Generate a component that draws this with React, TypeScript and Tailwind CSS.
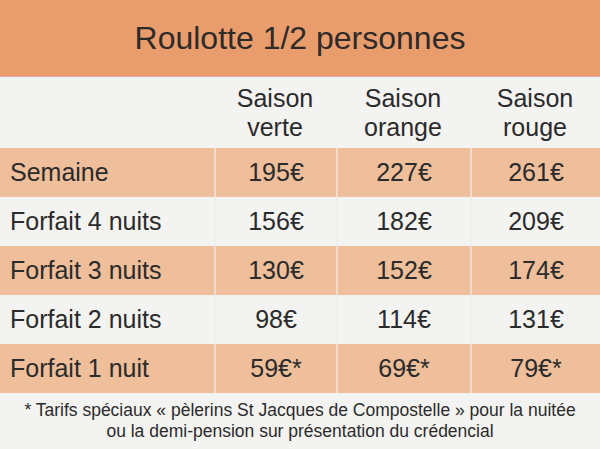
import React from "react";

const rows = [
  { label: "Semaine", v: ["195€", "227€", "261€"], colored: true },
  { label: "Forfait 4 nuits", v: ["156€", "182€", "209€"], colored: false },
  { label: "Forfait 3 nuits", v: ["130€", "152€", "174€"], colored: true },
  { label: "Forfait 2 nuits", v: ["98€", "114€", "131€"], colored: false },
  { label: "Forfait 1 nuit", v: ["59€*", "69€*", "79€*"], colored: true },
];

export default function App() {
  return (
    <div
      className="w-[600px] h-[449px] overflow-hidden bg-[#f3f3f1] text-[#2b2b2b] flex flex-col"
      style={{ fontFamily: '"Liberation Sans", Arial, sans-serif' }}
    >
      <div className="h-[77px] bg-[#e99d6d] border-b border-[#e3aab0] flex items-center justify-center">
        <h1 className="text-[32px] leading-none text-[#2e2a28]">Roulotte 1/2 personnes</h1>
      </div>
      <div className="grid grid-cols-[214px_122px_134px_130px] h-[71px] text-[25px] leading-[29px] text-center">
        <div />
        <div className="flex flex-col items-center justify-center">
          <span>Saison</span>
          <span>verte</span>
        </div>
        <div className="flex flex-col items-center justify-center">
          <span>Saison</span>
          <span>orange</span>
        </div>
        <div className="flex flex-col items-center justify-center">
          <span>Saison</span>
          <span>rouge</span>
        </div>
      </div>
      {rows.map((r) => (
        <div
          key={r.label}
          className={`grid grid-cols-[214px_122px_134px_130px] h-[49px] text-[25px] ${r.colored ? "bg-[#efbe9a]" : "bg-[#f3f3f1]"}`}
        >
          <div className="flex items-center pl-[10px]">{r.label}</div>
          {r.v.map((x, i) => (
            <div
              key={i}
              className={`flex items-center justify-center border-l-2 ${r.colored ? "border-[#f3dccb]" : "border-[#eeeeec]"}`}
            >
              {x}
            </div>
          ))}
        </div>
      ))}
      <div className="flex-1 flex flex-col items-center justify-center text-[17.5px] leading-[21px] text-center">
        <span>* Tarifs spéciaux « pèlerins St Jacques de Compostelle » pour la nuitée</span>
        <span>ou la demi-pension sur présentation du crédencial</span>
      </div>
    </div>
  );
}
